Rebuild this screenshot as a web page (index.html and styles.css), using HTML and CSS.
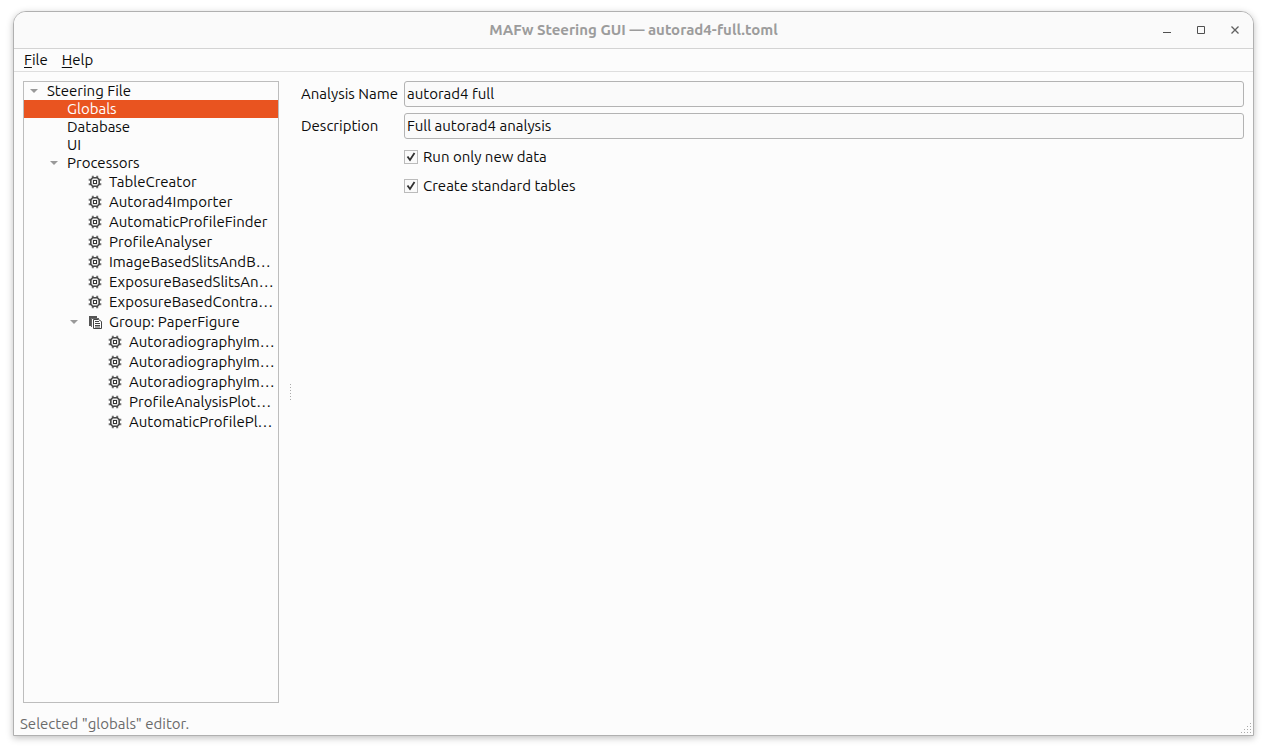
FILE: index.html
```html
<!DOCTYPE html>
<html lang="en">
<head>
<meta charset="utf-8">
<title>MAFw Steering GUI — autorad4-full.toml</title>
<link rel="stylesheet" href="styles.css">
</head>
<body>
<svg class="defs" aria-hidden="true">
  <symbol id="chip" viewBox="0 0 16 16">
    <path d="M5.800 1.700v12.600M10.200 1.700v12.600M1.700 5.800h12.600M1.700 10.200h12.600" stroke="#707070" stroke-width="2"/>
    <path d="M5.500 3h5L13 5.500v5L10.500 13h-5L3 10.500v-5z" fill="#484848"/>
    <path d="M6 4.600h4L11.400 6v4L10 11.400H6L4.600 10V6z" fill="#e8e8e8"/>
    <path d="M6 6h4v4H6z" fill="#333"/>
    <path d="M7 7h2v2H7z" fill="#fff"/>
  </symbol>
  <symbol id="group" viewBox="0 0 16 16">
    <path d="M2 2h8v2H4v8H2z" fill="#555"/>
    <path d="M4 4h8v1H5v8H4z" fill="#aaa"/>
    <path d="M4.500 13V4.500H12" fill="none" stroke="#666"/>
    <path d="M6.500 5.500h5l3 2v7h-8z" fill="#fff" stroke="#444"/>
    <path d="M8 7.500h4M8 9.500h5M8 11.500h5M8 13h5" stroke="#444"/>
  </symbol>
  <symbol id="arrow" viewBox="0 0 8 4"><path d="M0 0h8L4 4z" fill="#999"/></symbol>
</svg>
<div class="window">
  <header class="titlebar">
    <h1 class="title">MAFw Steering GUI — autorad4-full.toml</h1>
    <div class="controls">
      <button class="control" aria-label="Minimize"><svg viewBox="0 0 10 10"><path d="M1 7.500h8" stroke="#505050"/></svg></button>
      <button class="control" aria-label="Maximize"><svg viewBox="0 0 10 10"><path d="M1.500 1.500h7v7h-7z" fill="none" stroke="#505050"/></svg></button>
      <button class="control" aria-label="Close"><svg viewBox="0 0 10 10"><path d="M1.500 1.500l7 7M8.500 1.500l-7 7" stroke="#606060" stroke-width="1.300"/></svg></button>
    </div>
  </header>
  <nav class="menubar">
    <button class="menu"><u>F</u>ile</button>
    <button class="menu"><u>H</u>elp</button>
  </nav>
  <main class="content">
    <div class="tree" role="tree" aria-label="Steering file">
      <button class="row" role="treeitem"><span class="toggle"><svg><use href="#arrow"/></svg></span><span>Steering File</span></button>
      <button class="row level1 selected" role="treeitem" aria-selected="true"><span class="toggle"></span><span>Globals</span></button>
      <button class="row level1" role="treeitem"><span class="toggle"></span><span>Database</span></button>
      <button class="row level1" role="treeitem"><span class="toggle"></span><span>UI</span></button>
      <button class="row level1" role="treeitem"><span class="toggle"><svg><use href="#arrow"/></svg></span><span>Processors</span></button>
      <button class="row level2" role="treeitem"><span class="toggle"></span><svg class="icon"><use href="#chip"/></svg><span>TableCreator</span></button>
      <button class="row level2" role="treeitem"><span class="toggle"></span><svg class="icon"><use href="#chip"/></svg><span>Autorad4Importer</span></button>
      <button class="row level2" role="treeitem"><span class="toggle"></span><svg class="icon"><use href="#chip"/></svg><span>AutomaticProfileFinder</span></button>
      <button class="row level2" role="treeitem"><span class="toggle"></span><svg class="icon"><use href="#chip"/></svg><span>ProfileAnalyser</span></button>
      <button class="row level2" role="treeitem"><span class="toggle"></span><svg class="icon"><use href="#chip"/></svg><span>ImageBasedSlitsAndB…</span></button>
      <button class="row level2" role="treeitem"><span class="toggle"></span><svg class="icon"><use href="#chip"/></svg><span>ExposureBasedSlitsAn…</span></button>
      <button class="row level2" role="treeitem"><span class="toggle"></span><svg class="icon"><use href="#chip"/></svg><span>ExposureBasedContra…</span></button>
      <button class="row level2" role="treeitem"><span class="toggle"><svg><use href="#arrow"/></svg></span><svg class="icon"><use href="#group"/></svg><span>Group: PaperFigure</span></button>
      <button class="row level3" role="treeitem"><span class="toggle"></span><svg class="icon"><use href="#chip"/></svg><span>AutoradiographyIm…</span></button>
      <button class="row level3" role="treeitem"><span class="toggle"></span><svg class="icon"><use href="#chip"/></svg><span>AutoradiographyIm…</span></button>
      <button class="row level3" role="treeitem"><span class="toggle"></span><svg class="icon"><use href="#chip"/></svg><span>AutoradiographyIm…</span></button>
      <button class="row level3" role="treeitem"><span class="toggle"></span><svg class="icon"><use href="#chip"/></svg><span>ProfileAnalysisPlot…</span></button>
      <button class="row level3" role="treeitem"><span class="toggle"></span><svg class="icon"><use href="#chip"/></svg><span>AutomaticProfilePl…</span></button>
    </div>
    <div class="splitter"><svg class="grip" viewBox="0 0 1 16"><path d="M.5 0v16" stroke="#aaa" stroke-dasharray="1 2"/></svg></div>
    <form class="editor">
      <label for="name">Analysis Name</label>
      <input class="field" id="name" type="text" value="autorad4 full">
      <label for="description">Description</label>
      <input class="field" id="description" type="text" value="Full autorad4 analysis">
      <div class="checks">
        <label class="check"><input class="box" type="checkbox" checked>Run only new data</label>
        <label class="check"><input class="box" type="checkbox" checked>Create standard tables</label>
      </div>
    </form>
  </main>
  <footer class="statusbar">
    <span>Selected "globals" editor.</span>
    <svg class="sizegrip" viewBox="0 0 10 10"><path d="M9 0h1v1H9zM6 3h1v1H6zM9 3h1v1H9zM3 6h1v1H3zM6 6h1v1H6zM9 6h1v1H9zM0 9h1v1H0zM3 9h1v1H3zM6 9h1v1H6zM9 9h1v1H9z" fill="#aaa"/></svg>
  </footer>
</div>
</body>
</html>
```
FILE: styles.css
```css
* { box-sizing: border-box; }
body {
  margin: 0;
  padding: 11px 13px 16px;
  height: 100vh;
  background: #fff;
  color: #0c0c0c;
  font: 15px/18px Ubuntu, "Noto Sans", sans-serif;
}
button, input { font: inherit; color: inherit; }
button { border: 0; padding: 0; background: none; }
.defs { display: none; }
.window {
  display: flex;
  flex-direction: column;
  height: 100%;
  border: 1px solid #b0b0b0;
  border-radius: 13px 13px 0 0;
  background: #fcfcfc;
  box-shadow: 0 2px 7px rgba(0, 0, 0, 0.25);
}
.titlebar {
  display: grid;
  grid-template-columns: 1fr auto 1fr;
  align-items: center;
  height: 37px;
  border-bottom: 1px solid #d3d3d3;
  border-radius: 12px 12px 0 0;
  background: #fafafa;
}
.title {
  grid-column: 2;
  margin: 0;
  color: #9c9c9c;
  font-size: 15px;
  font-weight: 600;
}
.controls { display: flex; justify-content: flex-end; gap: 10px; padding-right: 6px; }
.control { display: grid; place-items: center; width: 24px; height: 24px; }
.control svg { width: 10px; height: 10px; }
.menubar {
  display: flex;
  gap: 14px;
  height: 23px;
  padding-left: 10px;
  border-bottom: 1px solid #dedede;
}
.menu u { text-underline-offset: 2px; }
.content { display: flex; flex: 1; min-height: 0; padding: 9px 9px 0; }
.tree {
  flex: none;
  width: 256px;
  overflow: hidden;
  border: 1px solid #bdbdbd;
  font-variant-ligatures: none;
}
.row {
  display: flex;
  align-items: center;
  width: 100%;
  height: 18px;
  white-space: nowrap;
  text-align: left;
}
.toggle { display: grid; place-items: center; flex: none; width: 20px; margin-right: 3px; }
.toggle svg { width: 8px; height: 4px; }
.icon { flex: none; width: 16px; height: 16px; margin-right: 6px; }
.level1 { padding-left: 20px; }
.level2 { height: 20px; padding-left: 40px; }
.level3 { height: 20px; padding-left: 60px; }
.selected { background: #e95420; color: #fff; }
.splitter { display: flex; align-items: center; justify-content: center; width: 22px; }
.grip { width: 1px; height: 16px; }
.editor {
  display: grid;
  flex: 1;
  grid-template-columns: 97px 1fr;
  gap: 6px;
  align-content: start;
  align-items: center;
}
.field {
  width: 100%;
  height: 26px;
  padding: 0 2px 2px;
  border: 1px solid #b3b3b3;
  border-radius: 3px;
  background: #fafafa;
}
.checks { display: grid; grid-column: 2; gap: 5px; }
.check { display: flex; align-items: center; gap: 5px; height: 24px; }
.box {
  width: 14px;
  height: 14px;
  margin: 0;
  appearance: none;
  border: 1px solid #bbb;
  background: #fafafa url("data:image/svg+xml,%3Csvg xmlns='http://www.w3.org/2000/svg' viewBox='0 0 12 12'%3E%3Cpath d='M2.500 5.500L5 9l4.500-7' fill='none' stroke='%23303030' stroke-width='1.800'/%3E%3C/svg%3E");
}
.statusbar {
  display: flex;
  align-items: center;
  justify-content: space-between;
  height: 32px;
  padding: 12px 2px 2px 6px;
  color: #6b6b6b;
}
.sizegrip { align-self: flex-end; width: 10px; height: 10px; }
```
